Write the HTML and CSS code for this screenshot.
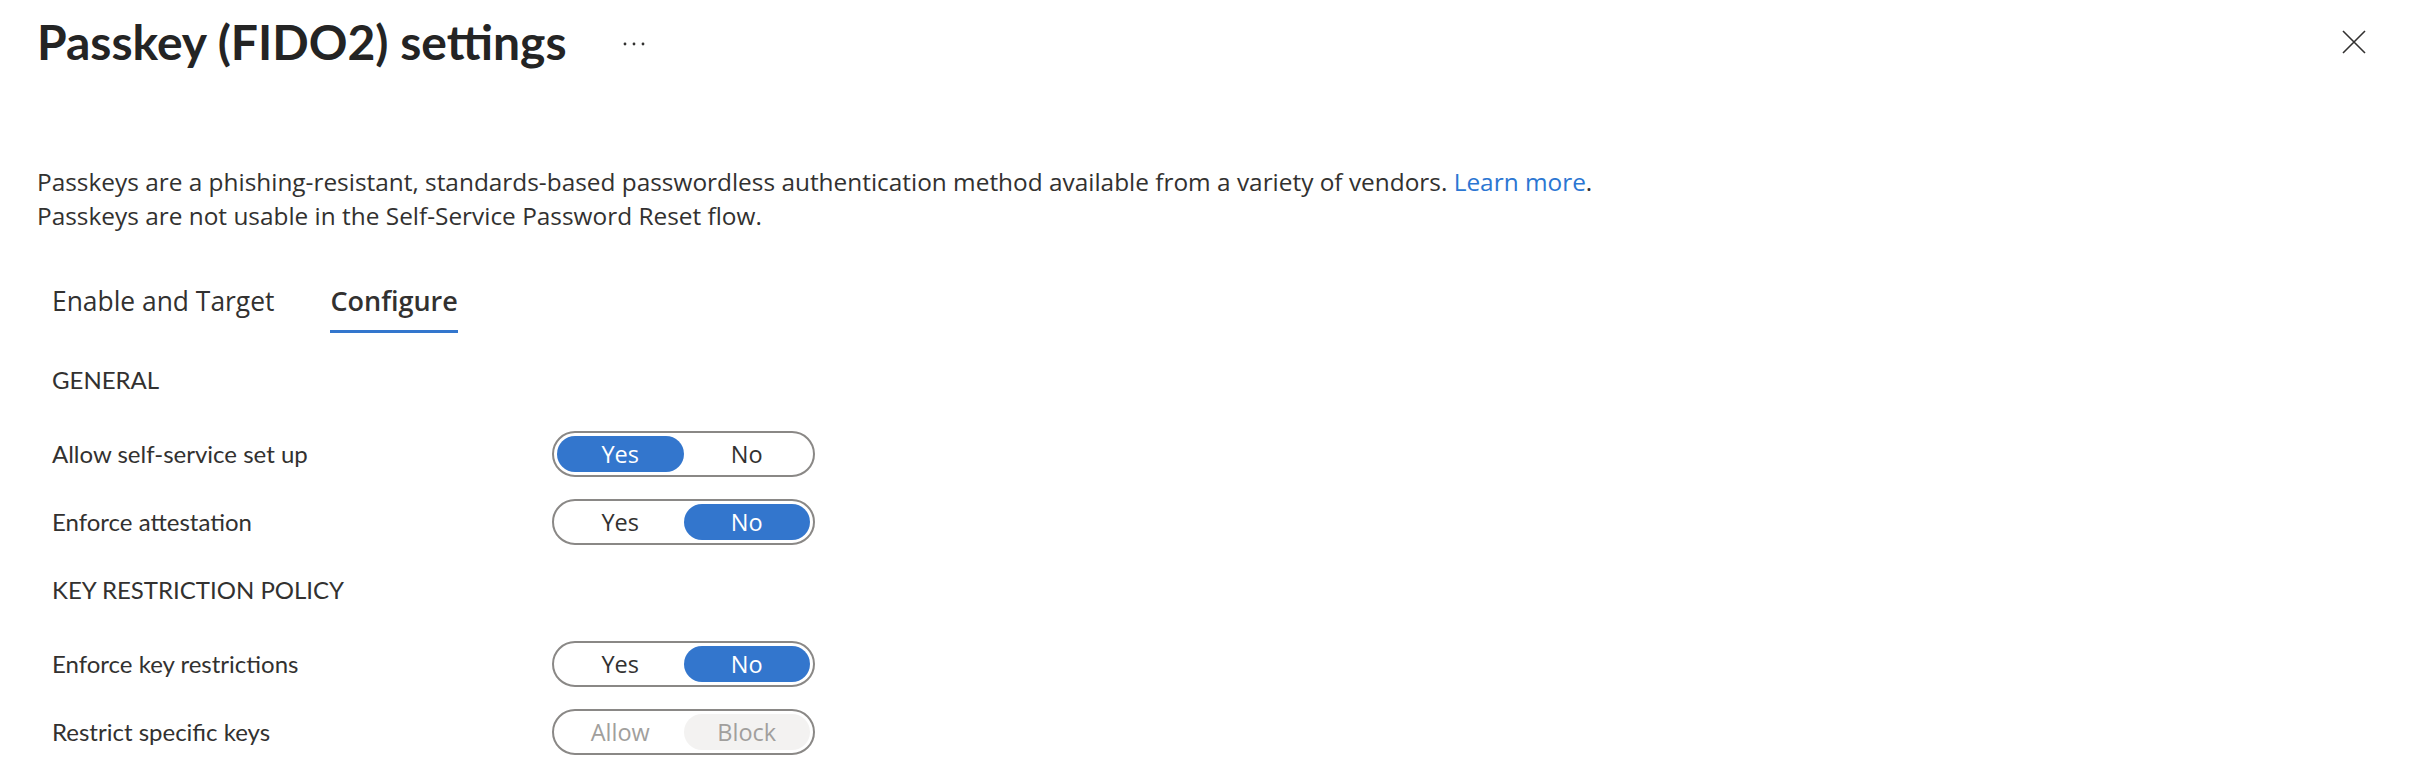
FILE: index.html
```html
<!DOCTYPE html>
<html lang="en">
<head>
<meta charset="utf-8">
<title>Passkey (FIDO2) settings</title>
<link rel="stylesheet" href="styles.css">
</head>
<body>
<div class="page">
  <header class="header">
    <div class="title-wrap">
      <h1 class="title">Passkey (FIDO2) settings</h1>
      <span class="more" aria-label="More">
        <svg width="22" height="4" viewBox="0 0 22 4"><circle cx="2" cy="2" r="1.4"/><circle cx="11" cy="2" r="1.4"/><circle cx="20" cy="2" r="1.4"/></svg>
      </span>
    </div>
    <button class="close" aria-label="Close">
      <svg width="24" height="24" viewBox="0 0 24 24"><path d="M1 1 L23 23 M23 1 L1 23"/></svg>
    </button>
  </header>

  <p class="desc">Passkeys are a phishing-resistant, standards-based passwordless authentication method available from a variety of vendors. <a class="link" href="#">Learn more</a>.<br>Passkeys are not usable in the Self-Service Password Reset flow.</p>

  <div class="content">
    <nav class="tabs">
      <span class="tab">Enable and Target</span>
      <span class="tab active">Configure</span>
    </nav>

    <div class="section-title first">GENERAL</div>

    <div class="rows">
      <div class="row">
        <div class="label">Allow self-service set up</div>
        <div class="toggle">
          <span class="seg on">Yes</span>
          <span class="seg">No</span>
        </div>
      </div>
      <div class="row">
        <div class="label">Enforce attestation</div>
        <div class="toggle">
          <span class="seg">Yes</span>
          <span class="seg on">No</span>
        </div>
      </div>
    </div>

    <div class="section-title">KEY RESTRICTION POLICY</div>

    <div class="rows">
      <div class="row">
        <div class="label">Enforce key restrictions</div>
        <div class="toggle">
          <span class="seg">Yes</span>
          <span class="seg on">No</span>
        </div>
      </div>
      <div class="row">
        <div class="label">Restrict specific keys</div>
        <div class="toggle disabled">
          <span class="seg">Allow</span>
          <span class="seg on">Block</span>
        </div>
      </div>
    </div>
  </div>
</div>
</body>
</html>
```
FILE: styles.css
```css
* { box-sizing: border-box; }
html, body { margin: 0; padding: 0; background: #ffffff; }
body {
  font-family: "Lato", "Open Sans", "Liberation Sans", sans-serif;
  color: #323130;
  overflow: hidden;
}
.page {
  width: 2416px;
  height: 764px;
  padding: 12px 50px 0 37px;
}
.header {
  display: flex;
  justify-content: space-between;
  align-items: flex-start;
  height: 60px;
}
.title-wrap {
  display: flex;
  align-items: center;
  gap: 56px;
  height: 60px;
}
.title {
  margin: 0;
  font-size: 48px;
  line-height: 60px;
  font-weight: 700;
  color: #242424;
}
.more { display: flex; align-items: center; padding-top: 4px; }
.more svg { fill: #323130; display: block; }
.close {
  border: 0;
  background: none;
  padding: 0;
  margin-top: 18px;
  width: 24px;
  height: 24px;
  cursor: pointer;
}
.close svg { display: block; stroke: #323130; stroke-width: 1.6; fill: none; }
.desc {
  margin: 93px 0 0 0;
  font-family: "Open Sans", "Lato", sans-serif;
  font-size: 24.4px;
  line-height: 34px;
}
.link { color: #2b76d2; text-decoration: none; }
.content { padding-left: 15px; }
.tabs {
  display: flex;
  gap: 56px;
  margin-top: 50px;
  height: 50px;
}
.tab {
  font-family: "Open Sans", "Lato", sans-serif;
  font-size: 26.4px;
  line-height: 36px;
  padding-bottom: 11px;
  border-bottom: 3px solid transparent;
  color: #323130;
}
.tab.active {
  font-weight: 600;
  font-size: 27px;
  border-bottom-color: #3376cd;
}
.section-title {
  font-size: 24px;
  line-height: 34px;
  margin-top: 28px;
}
.section-title.first { margin-top: 30px; }
.rows {
  display: flex;
  flex-direction: column;
  gap: 22px;
  margin-top: 34px;
}
.row {
  display: flex;
  align-items: center;
  height: 46px;
}
.label {
  width: 500px;
  font-size: 24px;
  line-height: 34px;
}
.toggle {
  display: flex;
  width: 263px;
  height: 46px;
  padding: 3px;
  border: 2px solid #8a8886;
  border-radius: 23px;
}
.seg {
  flex: 1;
  display: flex;
  align-items: center;
  justify-content: center;
  border-radius: 18px;
  font-family: "Open Sans", "Lato", sans-serif;
  font-size: 23.5px;
  color: #323130;
}
.seg.on { background: #3376cd; color: #ffffff; }
.toggle.disabled .seg { color: #a19f9d; }
.toggle.disabled .seg.on { background: #f3f2f1; color: #a19f9d; }
```
